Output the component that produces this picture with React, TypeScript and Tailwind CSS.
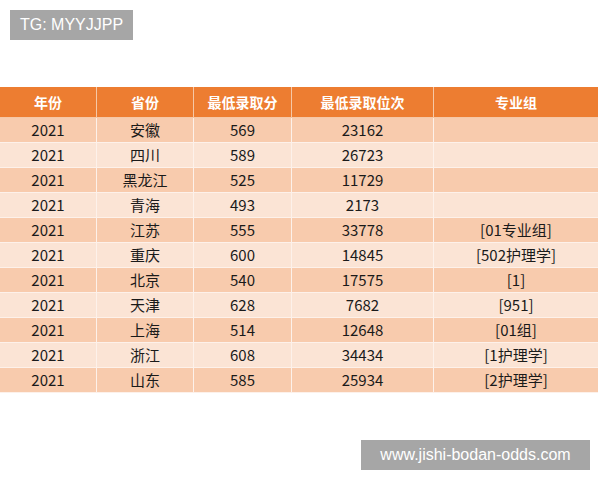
import React from "react";

const rows: [string, string, string, string, string][] = [
  ["2021", "安徽", "569", "23162", ""],
  ["2021", "四川", "589", "26723", ""],
  ["2021", "黑龙江", "525", "11729", ""],
  ["2021", "青海", "493", "2173", ""],
  ["2021", "江苏", "555", "33778", "[01专业组]"],
  ["2021", "重庆", "600", "14845", "[502护理学]"],
  ["2021", "北京", "540", "17575", "[1]"],
  ["2021", "天津", "628", "7682", "[951]"],
  ["2021", "上海", "514", "12648", "[01组]"],
  ["2021", "浙江", "608", "34434", "[1护理学]"],
  ["2021", "山东", "585", "25934", "[2护理学]"],
];

const headers = ["年份", "省份", "最低录取分", "最低录取位次", "专业组"];
const cols = "grid-cols-[97px_97px_98px_142px_164px]";

export default function App() {
  return (
    <div
      className="relative w-[600px] h-[480px] bg-white overflow-hidden"
      style={{ fontFamily: '"Noto Sans CJK SC", "Noto Sans", sans-serif' }}
    >
      <div className="h-[87px] pt-[10px] pl-[10px]">
        <div
          className="inline-flex items-center h-[30px] px-[10px] bg-[#a6a6a6] text-white text-[16px]"
          style={{ fontFamily: '"Liberation Sans", Arial, sans-serif' }}
        >
          TG: MYYJJPP
        </div>
      </div>
      <div className="w-[598px]">
        <div className={`grid ${cols} h-[31px] bg-[#ed7d31] text-white font-bold text-[14px]`}>
          {headers.map((h, i) => (
            <div
              key={i}
              className={`flex items-center justify-center border-b border-[#f6c8a6] ${i < 4 ? "border-r border-r-[#f6c8a6]" : ""}`}
            >
              {h}
            </div>
          ))}
        </div>
        {rows.map((r, ri) => (
          <div
            key={ri}
            className={`grid ${cols} h-[25px] text-[15px] text-[#1a1a1a] ${ri % 2 === 0 ? "bg-[#f8cbad]" : "bg-[#fbe4d5]"}`}
          >
            {r.map((c, ci) => (
              <div
                key={ci}
                className={`flex items-center justify-center border-b border-[#fdf1ea] ${ci < 4 ? "border-r border-r-[#fdf1ea]" : ""}`}
              >
                {c}
              </div>
            ))}
          </div>
        ))}
      </div>
      <div
        className="absolute left-[361px] top-[440px] w-[229px] h-[30px] flex items-center justify-center bg-[#a6a6a6] text-white text-[16px]"
        style={{ fontFamily: '"Liberation Sans", Arial, sans-serif' }}
      >
        www.jishi-bodan-odds.com
      </div>
    </div>
  );
}
